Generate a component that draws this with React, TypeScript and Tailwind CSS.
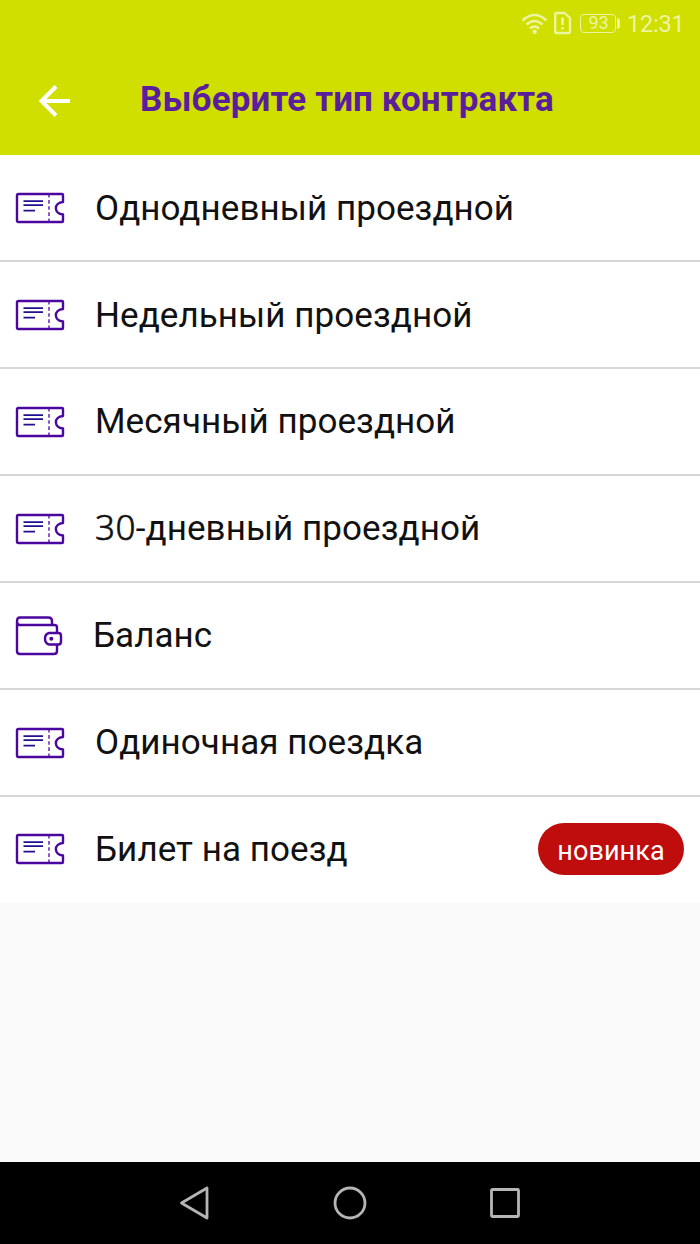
type Row = { label: string; digits?: string; height: string; offset?: string; kind: 'ticket' | 'wallet'; isNew?: boolean };

const rows: Row[] = [
  { label: 'Однодневный проездной', height: 'h-[107px]', offset: 'mt-px', kind: 'ticket' },
  { label: 'Недельный проездной', height: 'h-[107px]', offset: 'mt-px', kind: 'ticket' },
  { label: 'Месячный проездной', height: 'h-[107px]', kind: 'ticket' },
  { label: '-дневный проездной', digits: '30', height: 'h-[107px]', offset: 'mb-[3px]', kind: 'ticket' },
  { label: 'Баланс', height: 'h-[107px]', kind: 'wallet' },
  { label: 'Одиночная поездка', height: 'h-[107px]', kind: 'ticket' },
  { label: 'Билет на поезд', height: 'h-[106px]', kind: 'ticket', isNew: true },
];

function TicketIcon() {
  return (
    <svg className="h-8 w-[50px] shrink-0" viewBox="0 0 50 32" fill="none" stroke="#4b06a0">
      <path d="M3.500 2H47Q48 2 48 3V10C38.500 11 38.500 21.500 48 22.500V29Q48 30 47 30H3.500Q2 30 2 28.500V3.500Q2 2 3.500 2Z" strokeWidth="2.400" strokeLinejoin="round" />
      <path d="M34 3V29" strokeWidth="1.300" strokeDasharray="3.600 2.500" strokeDashoffset="1" />
      <path d="M8.500 9.200H28M8.500 13.200H28M8.500 18.700H20" stroke="#20108f" strokeWidth="1.700" />
    </svg>
  );
}

function WalletIcon() {
  return (
    <svg className="h-10 w-[50px] shrink-0" viewBox="0 0 50 40" fill="none" stroke="#4b06a0" strokeWidth="2.400">
      <path d="M5 1.500H33.500Q37 1.500 37 5V9M5 1.500Q2 1.500 2 5.500Q2 9 5 9H39.500Q42 9 42 11.500V17M2 5.500V35Q2 38 5 38H39Q42 38 42 35V28.500" />
      <path d="M34 17H43.500Q46 17 46 20V25.500Q46 28.500 43.500 28.500H34Q30 27.500 30 22.750Q30 18 34 17Z" />
      <circle cx="36.300" cy="22.700" r="2" fill="#4b06a0" stroke="none" />
    </svg>
  );
}

function StatusBar() {
  return (
    <div className="flex h-[46px] items-center text-[#edf5a3]">
      <svg className="ml-[521px] mt-px h-6 w-[27px]" viewBox="0 0 27 24" fill="none" stroke="currentColor" strokeWidth="2.500">
        <path d="M1.500 8.500Q13.500-2.500 25.500 8.500M5.500 12.500Q13.500 5.500 21.500 12.500M9 16.500Q13.500 12.500 18 16.500" />
        <circle cx="13.700" cy="19.800" r="2.200" fill="currentColor" stroke="none" />
      </svg>
      <svg className="ml-[6px] h-6 w-[18px]" viewBox="0 0 18 24" fill="none" stroke="currentColor" strokeWidth="2.300">
        <path d="M2.500 2H10.500L16 7V20.500Q16 22 14.500 22H2.500Q1.200 22 1.200 20.500V3.500Q1.200 2 2.500 2Z" strokeLinejoin="round" />
        <path d="M8.500 6.500V14M8.500 16V18.500" strokeWidth="2.600" />
      </svg>
      <div className="ml-2 flex h-[19px] w-9 items-center justify-center rounded-[4px] border border-current pl-px font-[Roboto] text-[18px] leading-none">93</div>
      <div className="ml-px h-[11px] w-[3px] rounded-r-sm bg-current" />
      <span className="ml-[7px] mt-[4px] whitespace-nowrap font-[Roboto] text-[23.500px] leading-none tracking-[-0.2px]">12:31</span>
    </div>
  );
}

export default function App() {
  return (
    <main className="flex h-[1244px] w-[700px] flex-col overflow-hidden bg-[#fafafa] font-[Roboto,sans-serif]">
      <header className="h-[155px] shrink-0 bg-[#d0df00]">
        <StatusBar />
        <div className="flex h-[108px] items-center">
          <svg className="ml-[38px] mt-[2px] h-8 w-8" viewBox="0 0 32 32" fill="none" stroke="#fff" strokeWidth="4">
            <path d="M18 1.500L3.500 16L18 30.500M3.500 16H32" />
          </svg>
          <h1 className="mb-px ml-[70px] whitespace-nowrap text-[35px] font-bold leading-none tracking-[0.13px] text-[#5a1d9c]">Выберите тип контракта</h1>
        </div>
      </header>
      <ul className="bg-white">
        {rows.map((row) => (
          <li key={row.label} className={`flex items-center border-[#d6d6d6] pl-[15px] pr-4 ${row.height} ${row.isNew ? 'pb-[2px]' : 'border-b-2'}`}>
            {row.kind === 'ticket' ? <TicketIcon /> : <WalletIcon />}
            <span className={`whitespace-nowrap text-[35px] leading-none tracking-[0.06px] text-[#111] ${row.offset ?? ''} ${row.kind === 'wallet' ? 'ml-7' : 'ml-[30px]'}`}>
              {row.digits && <span className="font-['Noto_Sans',sans-serif] font-light tracking-[0.4px] [-webkit-text-stroke:0.6px]">{row.digits}</span>}
              {row.label}
            </span>
            {row.isNew && (
              <span className="ml-auto flex h-[52px] w-[146px] items-center justify-center rounded-full bg-[#bf0d0d] pt-[5px] text-[27px] leading-none tracking-[0.1px] text-white">новинка</span>
            )}
          </li>
        ))}
      </ul>
      <nav className="mt-auto flex h-[82px] items-center bg-black text-[#b5b5b5]">
        <svg className="ml-[179px] h-[34px] w-[31px]" viewBox="0 0 31 34" fill="none" stroke="currentColor" strokeWidth="2.800" strokeLinejoin="round">
          <path d="M28 2V32L2.500 17Z" />
        </svg>
        <svg className="ml-[123px] h-[34px] w-[34px]" viewBox="0 0 34 34" fill="none" stroke="currentColor" strokeWidth="2.800">
          <circle cx="17" cy="17" r="15" />
        </svg>
        <svg className="ml-[123px] h-[30px] w-[30px]" viewBox="0 0 30 30" fill="none" stroke="currentColor" strokeWidth="2.800">
          <rect x="1.500" y="1.500" width="27" height="27" rx="1" />
        </svg>
      </nav>
    </main>
  );
}
